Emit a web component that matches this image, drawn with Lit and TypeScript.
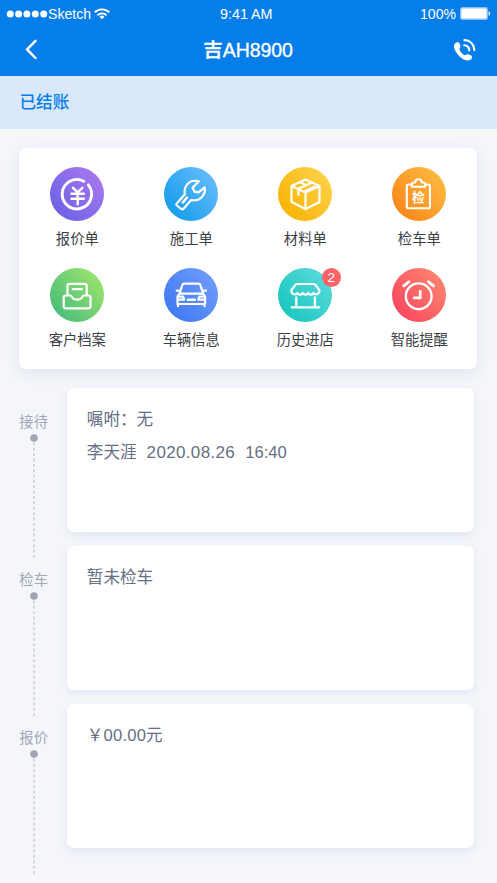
import { LitElement, html, svg, css, nothing } from "lit";
import { customElement } from "lit/decorators.js";

const icons = {
  quote: svg`<path d="M33.8 14.2A14.7 14.7 0 1 0 38.3 17.9" stroke-width="2.9"/>
    <path d="M23 20.8l4.7 4.6 4.7-4.6M27.7 25.4v11.8M21.5 26.7h12.4M21.5 31.8h12.4" stroke-width="2.5"/>`,
  wrench: svg`<path d="M34.800 14.300C30 13 25 14.600 22.300 18.600c-1.700 2.500-2.100 5.600-1.400 8.600l-8.100 9.200c-.6.7-.6 1.500.1 2.100l4.400 3.500c.7.600 1.600.5 2.200-.2l7.600-8.800c4.700 1.100 9.600-.6 12.100-4.600 1.600-2.500 2.100-5.300 1.500-8l-6.100 4.900-4-.6-2-3.900 6.200-6.500z" stroke-width="2.200"/>
    <path d="M18.900 35.300l4-4.600" stroke-width="2.600"/>`,
  box: svg`<path d="M27.500 12.500l14 6.400v16l-14 7.200-14-7.200v-16zM13.500 18.900l14 6.500 14-6.500M27.500 25.400v16.500M20.400 27.800v-6.100l13.700-6.200M20.400 21.700l13.600-6.200M22 15.200l5.500 2.500M26.800 24.300l9.500-4.500" stroke-width="2.200"/>`,
  inspect: svg`<path d="M20 17.500h-3.400a1.800 1.800 0 0 0-1.800 1.800v20.200a1.800 1.800 0 0 0 1.800 1.800h19.600a1.800 1.800 0 0 0 1.800-1.800V19.300a1.800 1.800 0 0 0-1.800-1.800H33" stroke-width="2.100"/>
    <path d="M19.800 19.800v-2.200c0-1.300.8-2.100 2.200-2.100h1c.3-2 1.600-3.300 3.500-3.300s3.200 1.300 3.500 3.300h1c1.400 0 2.200.8 2.200 2.100v2.200z" stroke-width="2.100"/>
    <text x="26.400" y="34.800" class="glyph">检</text>`,
  archive: svg`<path d="M17.500 26.200v-8.400a2 2 0 0 1 2-2h15.200a2 2 0 0 1 2 2v8.400M22.800 21.200h9" stroke-width="2.200"/>
    <path d="M15.700 27.500h4.200c1.200 0 1.700.8 2.200 1.700 1.900 3.300 8.100 3.300 10 0 .5-.9 1-1.700 2.200-1.700h4.200a2 2 0 0 1 2 2v8.800a2 2 0 0 1-2 2H15.700a2 2 0 0 1-2-2v-8.800a2 2 0 0 1 2-2z" stroke-width="2.200"/>`,
  car: svg`<path d="M15.600 25.700l2.600-8.400a2.200 2.200 0 0 1 2.200-1.600h13.900a2.200 2.200 0 0 1 2.200 1.600l2.600 8.400M12.700 22.700h2.500M39.500 22.700H42M15.500 25.700h23.600l2 2.700v7.600H13.500v-7.600zM13.500 28.600h5.700l1 3.100h-6M41 28.600h-5.700l-1 3.100h6M14 36v2.200M40.500 36v2.200" stroke-width="2.200"/>
    <path d="M23.800 31.700h7" stroke-width="2.500"/>`,
  shop: svg`<path d="M19.100 16h16.600a2 2 0 0 1 1.500.7l4.100 5.300v1.800a3.100 3.100 0 0 1-5.600 1.200 3.100 3.100 0 0 1-5.500 0 3.100 3.100 0 0 1-5.500 0 3.100 3.100 0 0 1-5.500 0 3.100 3.100 0 0 1-5.700-1.200V22l4.100-5.300a2 2 0 0 1 1.500-.7z" stroke-width="2.200"/>
    <path d="M18.300 29.500v9M36.900 29.500v9M13.700 39.300h27.400" stroke-width="2.300"/>`,
  alarm: svg`<circle cx="26.700" cy="28.300" r="12.900" stroke-width="2.400"/>
    <path d="M28.200 23.400v6.500h-6" stroke-width="2.700"/><path d="M11.800 17.900l5-4.100M36.500 13.800l5 4.100" stroke-width="3"/>`,
};

interface Entry { label: string; icon: keyof typeof icons; badge?: number }

const entries: Entry[] = [
  { label: "报价单", icon: "quote" },
  { label: "施工单", icon: "wrench" },
  { label: "材料单", icon: "box" },
  { label: "检车单", icon: "inspect" },
  { label: "客户档案", icon: "archive" },
  { label: "车辆信息", icon: "car" },
  { label: "历史进店", icon: "shop", badge: 2 },
  { label: "智能提醒", icon: "alarm" },
];

interface Part { text: string; kind: string }

const steps: { label: string; lines: Part[][] }[] = [
  {
    label: "接待",
    lines: [
      [{ text: "嘱咐：无", kind: "text" }],
      [{ text: "李天涯", kind: "text" }, { text: "2020.08.26", kind: "date" }, { text: "16:40", kind: "time" }],
    ],
  },
  { label: "检车", lines: [[{ text: "暂未检车", kind: "text" }]] },
  { label: "报价", lines: [[{ text: "￥00.00元", kind: "price" }]] },
];

@customElement("app-header")
class AppHeader extends LitElement {
  static styles = css`
    :host { display: block; height: 76px; background: #067eea; color: #fff; }
    .status { display: grid; grid-template-columns: 1fr auto 1fr; height: 27px; align-items: center; padding: 0 6px; font-size: 14.1px; }
    .left, .right { display: flex; align-items: center; }
    .right { justify-content: flex-end; gap: 4px; }
    .clock { font-size: 14.300px; margin-right: 4.500px; }
    .wifi { margin-left: 3px; }
    .nav { display: grid; grid-template-columns: 1fr auto 1fr; height: 46px; align-items: center; padding: 0 20px 0 19px; }
    h1 { margin: 0; font-size: 19.5px; font-weight: 500; line-height: 28px; letter-spacing: -.1px; -webkit-text-stroke: .3px #fff; }
    .call { justify-self: end; }
    svg { display: block; }
  `;
  render() {
    return html`
      <div class="status">
        <div class="left">
          <svg width="42" height="10" fill="#fff">${[4.3, 12.6, 20.9, 29.3, 37.7].map((x) => svg`<circle cx=${x} cy="5" r="3.500"/>`)}</svg>
          <span>Sketch</span>
          <svg class="wifi" width="16" height="12" viewBox="0 0 16 12" fill="none" stroke="#fff" stroke-width="1.900">
            <path d="M.8 4.300a10.300 10.300 0 0 1 14.400 0M3.500 7.200a6.400 6.400 0 0 1 9 0"/>
            <path d="M8 11.300L5.500 8.800a3.600 3.600 0 0 1 5 0z" fill="#fff" stroke="none"/>
          </svg>
        </div>
        <span class="clock">9:41 AM</span>
        <div class="right">
          <span>100%</span>
          <svg width="31" height="13" viewBox="0 0 31 13">
            <rect x=".7" y=".7" width="26.600" height="11.600" rx="1.500" fill="#fff" stroke="#83bef5" stroke-width="1.400"/>
            <path d="M28.600 4.200c2 .5 2 4.100 0 4.600z" fill="#fff"/>
          </svg>
        </div>
      </div>
      <div class="nav">
        <svg width="24" height="24" fill="none" stroke="#fff" stroke-width="2.500" stroke-linecap="round" stroke-linejoin="round"><path d="M16.500 2.800L8 11.300l8.500 8.700"/></svg>
        <h1>吉AH8900</h1>
        <svg class="call" width="26" height="26" viewBox="0 0 26 26" fill="none" stroke="#fff" stroke-width="2.100" stroke-linecap="round">
          <path d="M4.300 6.200c1.300-1.500 3.300-1.300 4.300.3l.8 2.300c.5 1.500-1.200 2.500-.9 3.700.6 2.100 2.900 4.700 4.900 5.600 1.300.6 2.200-1.300 3.800-.8l2.500 1c1.800.8 1.700 3 .2 4.200-2.600 2-6.300.9-9.700-1.700C6.800 18 3.400 13.700 3 9.800c-.1-1.500.3-2.600 1.300-3.600z" fill="#fff" stroke="none"/>
          <path d="M13.400 3.100c5.400-.2 9.800 4.300 9.900 10M13.200 8.200c2.900.2 4.900 2.300 5.100 5.200"/>
        </svg>
      </div>`;
  }
}

@customElement("entry-grid")
class EntryGrid extends LitElement {
  static styles = css`
    :host { display: grid; grid-template-columns: repeat(4, 114px); grid-auto-rows: 100.6px; justify-content: center; box-sizing: border-box; width: 458px; height: 220.500px; padding-top: 19px; background: #fff; border-radius: 7px; box-shadow: 0 4px 14px rgba(55, 90, 135, .1); }
    .entry { display: flex; flex-direction: column; align-items: center; gap: 7px; }
    .disc { position: relative; width: 54px; height: 54px; border-radius: 50%; }
    .disc svg { display: block; fill: none; stroke: #fff; stroke-linecap: round; stroke-linejoin: round; }
    .glyph { fill: #fff; stroke: none; font-size: 12.800px; font-weight: 700; text-anchor: middle; }
    .label { font-size: 14.300px; line-height: 22px; color: #3b3e46; }
    .badge { position: absolute; top: 0; left: 43.500px; width: 19px; height: 19px; border-radius: 50%; background: #fc6468; color: #fff; font-size: 13.500px; line-height: 19px; text-align: center; }
    .quote { background: linear-gradient(50deg, #6b61e6 10%, #a878ee 90%); }
    .wrench { background: linear-gradient(50deg, #139bea 10%, #66bdfd 90%); }
    .box { background: linear-gradient(50deg, #f8b204 10%, #fed24a 90%); }
    .inspect { background: linear-gradient(50deg, #fa8519 10%, #fdbb40 90%); }
    .archive { background: linear-gradient(50deg, #48bd7a 10%, #9ce36d 90%); }
    .car { background: linear-gradient(50deg, #4078f3 10%, #6f9cfb 90%); }
    .shop { background: linear-gradient(50deg, #18c7bd 10%, #5ad9dc 90%); }
    .alarm { background: linear-gradient(50deg, #f84660 10%, #fe856d 90%); }
  `;
  render() {
    return entries.map((e) => html`
      <div class="entry">
        <div class="disc ${e.icon}">
          <svg width="54" height="54" viewBox="0 0 54 54">${icons[e.icon]}</svg>
          ${e.badge ? html`<span class="badge">${e.badge}</span>` : nothing}
        </div>
        <span class="label">${e.label}</span>
      </div>`);
  }
}

@customElement("step-timeline")
class StepTimeline extends LitElement {
  static styles = css`
    :host { display: flex; flex-direction: column; gap: 14.200px; }
    .step { display: grid; grid-template-columns: 67.300px 406.700px; grid-template-rows: 144px; align-items: start; height: 144px; }
    .rail { display: flex; flex-direction: column; align-items: center; height: 172px; padding-top: 23.500px; box-sizing: border-box; }
    .name { font-size: 14.300px; line-height: 22px; color: #a1a6b8; }
    .rail svg { display: block; margin-top: 1px; }
    .card { box-sizing: border-box; height: 144px; background: #fff; border-radius: 7px; padding: 15px 20px 15px 19.500px; color: #666f85; font-size: 16.600px; line-height: 33.600px; box-shadow: 0 4px 8px rgba(90, 105, 190, .1); }
    .line { display: flex; gap: 10px; white-space: pre; }
    .date { font-size: 17px; letter-spacing: .35px; }
    .time { font-size: 16.600px; }
    .price { font-size: 16.600px; letter-spacing: .2px; }
  `;
  render() {
    return steps.map((s) => html`
      <div class="step">
        <div class="rail">
          <span class="name">${s.label}</span>
          <svg width="8" height="125">
            <path d="M4 8.500V125" stroke="#cdd0d8" stroke-width="1.600" stroke-dasharray="2.900 2.460"/>
            <circle cx="4" cy="4" r="3.800" fill="#9fa5b6"/>
          </svg>
        </div>
        <div class="card">
          ${s.lines.map((l) => html`<div class="line">${l.map((p) => html`<span class=${p.kind}>${p.text}</span>`)}</div>`)}
        </div>
      </div>`);
  }
}

@customElement("app-root")
class AppRoot extends LitElement {
  static styles = css`
    :host { display: flex; flex-direction: column; box-sizing: border-box; width: 497px; height: 883px; overflow: hidden; background: #f4f6fa; font-family: "Liberation Sans", "Noto Sans CJK SC", sans-serif; }
    .state { height: 52.500px; padding-left: 19.500px; line-height: 54px; background: #dae8fb; color: #067eea; font-size: 16.600px; font-weight: 500; }
    entry-grid { margin: 19.500px 0 19px 19.300px; flex-shrink: 0; }
  `;
  render() {
    return html`
      <app-header></app-header>
      <div class="state">已结账</div>
      <entry-grid></entry-grid>
      <step-timeline></step-timeline>`;
  }
}
